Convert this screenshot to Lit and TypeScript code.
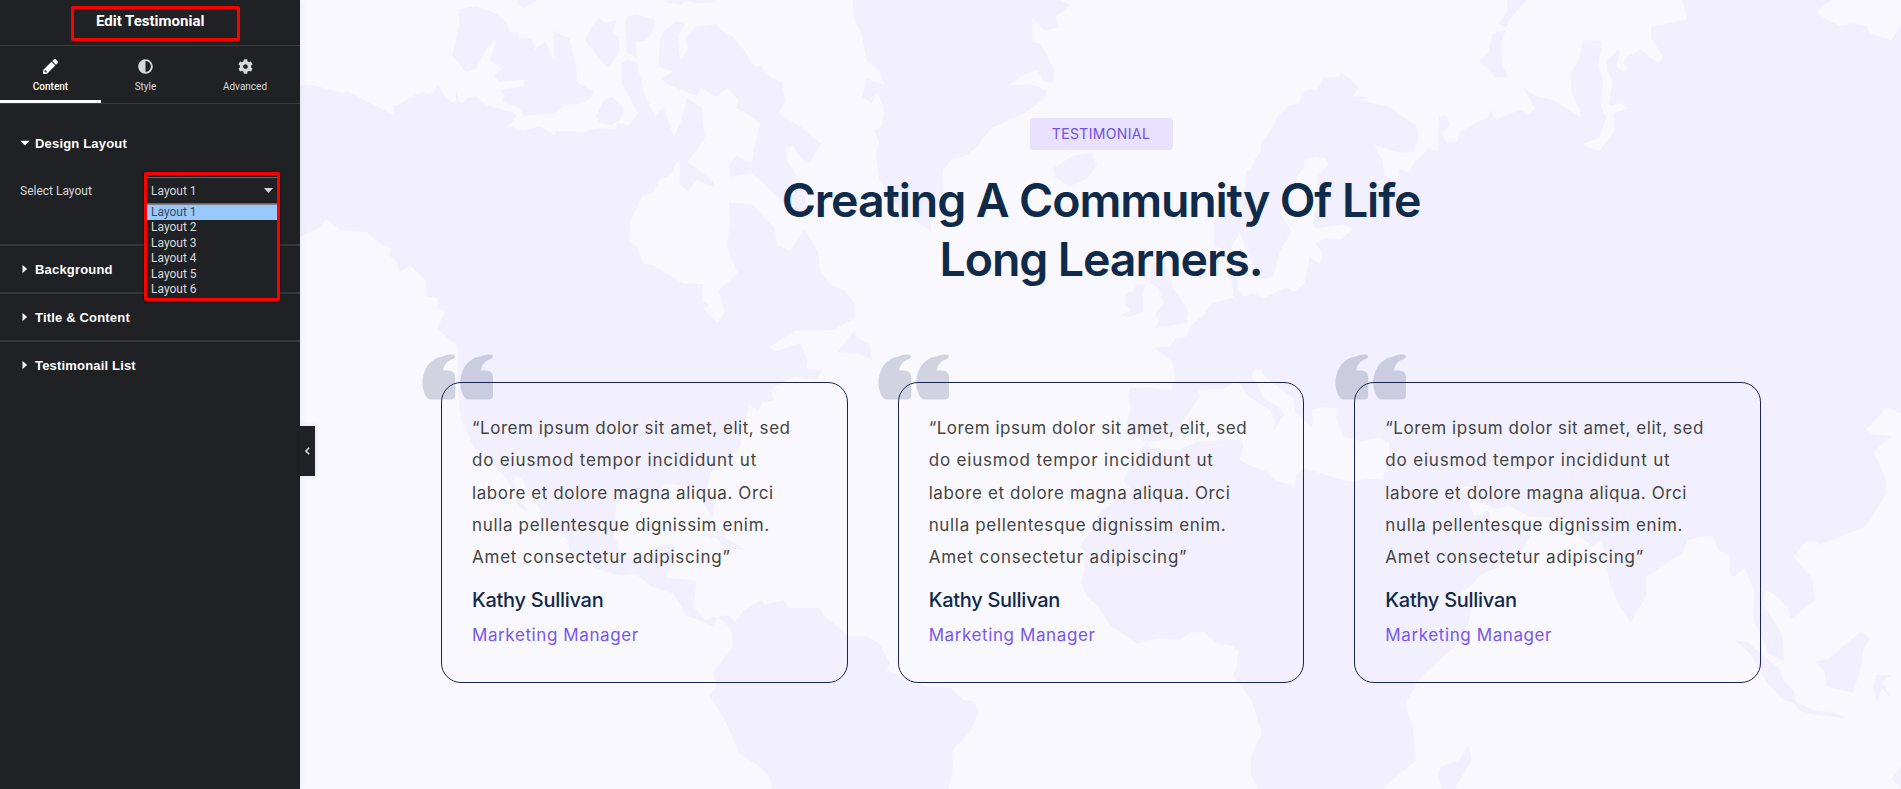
import { LitElement, html, svg, css } from "lit";
import { customElement, property, state } from "lit/decorators.js";
import { classMap } from "lit/directives/class-map.js";
import { styleMap } from "lit/directives/style-map.js";

/* Each map sheet is traced on its own grid and placed by its transform. */
const SHEETS: { transform: string; land: string[]; water: string[] }[] = [
  {
    transform: "translate(290 0) scale(.5102 .33333)",
    land: [
      "M0 256 15 256 40 254 100 277 115 275 205 347 203 315 215 312 245 285 265 276 270 283 283 275 290 252 300 282 318 308 325 302 325 272 334 310 340 308 350 290 365 290 385 315 435 335 445 348 428 377 458 391 490 380 518 404 522 392 575 396 600 385 640 388 640 368 655 372 665 376 680 345 700 300 715 350 732 322 752 410 765 370 778 292 808 325 810 370 815 410 780 485 830 545 830 560 797 540 780 575 763 550 765 500 760 480 745 525 725 540 710 580 690 590 668 660 665 722 680 740 693 792 712 795 770 850 808 853 808 903 822 915 810 925 838 967 852 935 840 872 878 820 855 738 862 680 860 608 905 612 950 685 955 735 980 752 1000 710 1007 685 1035 755 1040 815 1060 855 1085 870 1107 910 1107 955 1065 990 990 992 940 1040 950 1055 1000 1030 1015 1080 1012 1105 1045 1110 1030 1140 990 1130 950 1160 938 1200 330 1200 328 1040 288 985 305 935 288 925 290 895 268 890 265 840 235 795 215 820 210 790 195 765 198 745 180 735 150 697 100 690 70 657 58 682 15 715 0 730Z",
      "M330 28 365 18 400 38 425 65 430 95 445 95 450 115 475 115 480 150 500 125 518 180 516 92 548 115 560 190 565 250 597 275 585 300 560 315 540 313 520 340 460 348 450 325 415 305 420 290 412 270 460 258 458 240 410 245 400 225 415 208 392 180 405 115 385 145 365 205 345 217 318 165 332 75Z",
      "M590 85 605 55 618 68 640 60 632 100 645 110 645 160 623 205 578 122Z",
      "M660 50 680 42 715 60 710 100 695 122 678 122 680 178 660 155 657 80Z",
      "M650 190 662 178 680 190 695 285 715 345 705 360 682 338 650 250Z",
      "M600 350 615 300 632 290 655 325 648 360 630 375 610 372Z",
      "M735 90 755 65 775 68 760 110 765 180 780 150 775 115 795 80 835 72 845 90 870 112 890 150 910 200 922 197 945 235 965 245 970 305 958 340 1005 385 1042 432 1030 455 1020 492 1005 480 985 438 972 445 975 485 1010 570 1010 640 985 640 935 560 905 520 865 530 858 500 875 465 905 490 910 440 922 370 890 335 875 325 878 300 858 263 835 290 805 262 800 290 735 250 730 235 750 215 722 200 725 120Z",
      "M445 10 458 26 485 0 445 0Z",
      "M730 0 738 8 765 14 775 4 800 10 835 5 835 0Z",
      "M1102 0 1107 65 1120 100 1130 180 1155 215 1165 255 1130 235 1122 290 1140 310 1150 275 1165 330 1160 380 1145 390 1155 430 1148 460 1155 540 1200 640 1255 690 1262 640 1280 580 1280 510 1300 475 1320 470 1340 450 1375 385 1440 340 1480 295 1482 270 1450 252 1410 255 1430 230 1465 210 1478 245 1495 248 1498 210 1482 160 1470 130 1455 125 1455 55 1480 92 1508 80 1500 50 1530 15 1510 0Z",
      "M1107 990 1112 1015 1135 1030 1141 1080 1110 1060 1073 1057Z",
    ],
    water: [],
  },
  {
    transform: "translate(1090 0) scale(.51722 .33333)",
    land: [
      "M1145 0 1155 58 1085 80 1085 115 1108 170 1098 190 1065 148 1038 170 1030 190 1042 205 1030 215 1018 200 1025 145 1000 180 1000 210 1010 245 1003 318 1028 310 1040 325 1012 340 1015 390 985 453 953 437 958 428 985 415 998 350 988 320 992 240 983 200 990 122 953 120 943 190 928 215 932 285 948 330 948 352 895 300 860 288 838 260 845 285 860 325 850 342 830 330 785 360 775 330 770 350 715 395 710 425 690 428 680 400 695 375 690 345 675 350 672 455 655 445 625 490 618 518 595 505 600 545 570 530 565 480 550 435 600 458 625 455 636 410 630 375 580 322 525 300 540 290 508 290 520 260 487 218 480 232 452 232 440 268 420 270 408 280 405 310 385 315 360 355 355 380 330 430 330 455 318 480 310 515 302 510 300 570 240 670 240 740 270 750 290 700 310 775 330 840 355 830 365 760 390 695 368 640 385 560 415 500 415 480 435 470 455 475 460 495 440 530 440 600 430 680 440 685 490 672 508 688 485 718 455 715 435 730 450 760 445 795 425 770 415 850 395 875 380 862 335 895 315 878 300 888 285 870 285 830 270 800 278 893 235 910 220 945 195 975 185 1010 165 1015 155 1040 125 1045 160 1085 165 1130 160 1175 75 1172 78 1205 1568 1205 1568 70 1550 122 1508 100 1502 78 1475 70 1450 78 1410 45 1408 30 1435 0Z",
      "M808 0 845 0 810 60 795 130 797 190 808 233 783 232 753 180 770 160 778 100 808 88 788 70 805 40Z",
      "M120 790 145 790 160 860 190 930 187 970 125 985 133 960 125 945 143 905 130 860 115 850Z",
      "M85 853 108 853 103 880 103 935 78 950 60 945 78 930 68 915 68 880 82 875Z",
      "M-71 504.900-33 467.100 1 459 14 495-5 535-39 560-68 531Z",
    ],
    water: [],
  },
  {
    transform: "translate(870 300) scale(.33333)",
    land: [
      "M855 140 905 180 915 230 905 270 825 262 780 265 773 285 782 320 765 400 800 415 830 425 770 520 760 545 780 560 690 640 630 740 650 760 635 850 650 890 680 915 720 975 800 1030 870 1015 930 1020 960 998 1005 995 1035 1030 1080 1035 1105 1050 1100 1100 1088 1125 1145 1200 1175 1300 1142 1370 1142 1420 1165 1467 1538 1467 1565 1440 1565 130Z",
    ],
    water: [
      "M830 427 925 410 940 360 990 290 985 270 1060 268 1090 248 1112 252 1130 285 1200 330 1215 360 1212 392 1232 360 1245 345 1225 320 1180 295 1160 245 1145 235 1148 213 1172 208 1185 232 1270 295 1275 335 1325 383 1335 345 1360 325 1400 325 1395 345 1420 410 1500 430 1550 415 1575 430 1565 480 1540 540 1500 535 1440 545 1300 505 1280 525 1275 555 1240 550 1215 540 1190 515 1150 500 1108 480 1120 440 1115 418 980 425 930 450 840 445Z",
    ],
  },
  {
    transform: "translate(1090 390) scale(.51722 .33333)",
    land: [
      "M570 0 1568 0 1568 70 1540 52 1500 120 1515 133 1550 138 1515 185 1538 265 1540 310 1500 410 1410 465 1405 455 1385 455 1360 500 1395 560 1402 630 1355 688 1348 650 1320 610 1305 600 1300 640 1325 700 1340 740 1342 815 1310 790 1300 740 1282 690 1285 600 1265 535 1245 560 1235 545 1238 500 1215 480 1205 438 1185 440 1155 450 1145 490 1075 560 1075 620 1045 698 1025 650 1005 580 990 450 972 470 940 430 945 400 918 385 850 380 808 345 790 358 750 335 735 290 715 292 730 325 742 375 755 375 770 360 778 400 820 405 850 440 832 490 790 530 755 555 735 590 665 655 740 640 730 710 705 770 640 860 610 940 625 1020 630 1110 565 1197 560 1197Z",
      "M732 1065 738 1110 705 1197 680 1197 672 1150 680 1130 715 1110Z",
      "M1245 748 1270 755 1335 840 1340 870 1360 900 1365 935 1400 960 1440 968 1460 985 1400 975 1370 960 1362 938 1340 930 1310 880 1275 790Z",
      "M1402 815 1430 805 1490 725 1508 745 1495 780 1490 840 1475 910 1425 890 1420 845Z",
      "M1520 855 1552 855 1532 875 1548 920 1530 895 1522 940 1515 890Z",
      "M1568 1130 1550 1165 1568 1197Z",
    ],
    water: ["M430 60 450 50 475 58 480 140 520 155 560 143 578 160 578 205 567 262 545 268 505 270 440 240Z"],
  },
  {
    transform: "translate(290 390) scale(.5102 .33333)",
    land: [
      "M328 0 335 90 360 170 425 265 440 320 450 350 500 400 545 450 548 490 600 535 650 558 675 550 710 590 750 610 768 650 775 675 828 707 840 680 860 675 872 695 890 660 925 630 930 645 965 630 980 655 1040 655 1045 675 1095 737 1130 738 1155 760 1175 820 1170 842 1235 878 1238 888 1295 893 1320 930 1343 935 1350 970 1335 1020 1300 1080 1298 1150 1290 1200 945 1200 940 1160 920 1130 880 1090 855 1000 822 915 838 890 828 850 868 770 865 720 848 690 828 680 815 690 790 650 795 600 797 572 735 562 750 530 752 460 720 470 705 510 670 510 645 480 635 430 640 340 670 310 725 310 735 280 800 295 812 340 828 385 832 340 815 300 825 250 845 220 885 165 880 110 895 85 900 45 918 62 925 40 950 30 938 0Z",
      "M785 437 820 428 850 440 893 480 850 475 840 450 820 438Z",
    ],
    water: ["M437 262 455 265 465 305 510 400 495 400 470 370 445 320Z"],
  },
];

@customElement("world-map")
class WorldMap extends LitElement {
  static styles = css`
    :host { display: block; }
    .map { display: block; width: 100%; height: 100%; }
    .land { fill: #f2f0fe; }
    .water { fill: #f9f8ff; }
  `;
  render() {
    return html`<svg class="map" viewBox="300 0 1601 789" preserveAspectRatio="none" aria-hidden="true">
      ${SHEETS.map(
        (s) => svg`<g transform=${s.transform}>
          ${s.land.map((d) => svg`<path class="land" d=${d}></path>`)}
          ${s.water.map((d) => svg`<path class="water" d=${d}></path>`)}
        </g>`
      )}
    </svg>`;
  }
}

interface Line { text: string; tracking: number; }
const QUOTE: Line[] = [
  { text: "“Lorem ipsum dolor sit amet, elit, sed", tracking: 0.54 },
  { text: "do eiusmod tempor incididunt ut", tracking: 0.82 },
  { text: "labore et dolore magna aliqua. Orci", tracking: 0.6 },
  { text: "nulla pellentesque dignissim enim.", tracking: 0.66 },
  { text: "Amet consectetur adipiscing”", tracking: 0.78 },
];

@customElement("testimonial-card")
class TestimonialCard extends LitElement {
  @property() name = "";
  @property() position = "";
  @property({ attribute: false }) lines: Line[] = [];

  static styles = css`
    :host { display: block; }
    .card {
      position: relative;
      box-sizing: border-box;
      height: 301px;
      border: 1px solid #1a2552;
      border-radius: 20px;
      padding: 29px 30px;
      font-family: Inter, sans-serif;
    }
    .mark {
      position: absolute;
      left: -20.4px;
      top: -29px;
      width: 71px;
      height: 46px;
      fill: #142250;
      opacity: 0.17;
    }
    .line { display: block; height: 32.3px; font-size: 17px; line-height: 32.3px; color: #454540; white-space: nowrap; font-weight: 400; }
    .name { margin-top: 12.2px; font-size: 20px; line-height: 28px; font-weight: 550; letter-spacing: -0.28px; color: #10294a; }
    .role { margin-top: 5.5px; font-size: 17px; line-height: 32px; font-weight: 400; letter-spacing: 0.6px; color: #7857ec; }
  `;
  render() {
    const mark = "M97 48C52 54 36 96 36 128C36 150 45 167 52 174Q55 177 60 177H122Q134 177 134 165V110Q134 90 112 90H97Q101 64 129 55Q134 52 134 48Q133 42 126 42C114 42 105 44 97 48Z";
    return html`<article class="card">
      <svg class="mark" viewBox="34.500 40.500 213 138" aria-hidden="true">
        <path d=${mark}></path>
        <path d=${mark} transform="translate(113.500 0)"></path>
      </svg>
      ${this.lines.map((l) => html`<span class="line" style=${styleMap({ letterSpacing: `${l.tracking}px` })}>${l.text}</span>`)}
      <div class="name">${this.name}</div>
      <div class="role">${this.position}</div>
    </article>`;
  }
}

@customElement("editor-panel")
class EditorPanel extends LitElement {
  @state() private selected = 1;
  @state() private tab = "Content";

  static styles = css`
    :host { display: block; }
    .panel {
      position: relative;
      box-sizing: border-box;
      width: 300px;
      height: 789px;
      background: #1f2124;
      color: #d5d8dc;
      font-family: Roboto, sans-serif;
      box-shadow: 0 0 8px rgba(30, 20, 60, 0.06);
    }
    .header { display: flex; height: 45px; padding-left: 71px; border-bottom: 1px solid #3a3b3f; }
    .title {
      box-sizing: border-box;
      width: 169px;
      height: 35px;
      margin-top: 6px;
      padding-left: 22px;
      border: 3px solid #fe0000;
      border-radius: 2px;
      font-size: 15px;
      line-height: 24px;
      font-weight: 700;
      color: #fff;
    }
    .tabs { display: grid; grid-template-columns: 101px 89px 110px; height: 57px; border-bottom: 1px solid #3a3b3f; }
    .tab {
      box-sizing: border-box;
      display: flex;
      flex-direction: column;
      align-items: center;
      padding-top: 13px;
      border-bottom: 3px solid transparent;
      font-size: 10px;
      line-height: 12px;
      font-weight: 400;
      cursor: pointer;
    }
    .tab.on { border-bottom-color: #fff; color: #fff; font-weight: 500; }
    .tab svg { width: 15px; height: 15px; fill: currentColor; margin-bottom: 7px; }
    .section-title {
      display: flex;
      align-items: center;
      height: 46px;
      padding-left: 20px;
      border-bottom: 2px solid #36373b;
      font: 700 13px "Liberation Sans", sans-serif;
      letter-spacing: 0.18px;
      color: #fff;
    }
    .section-title.last { border-bottom: 0; }
    .section-title svg { width: 10px; height: 10px; margin-right: 5px; margin-top: -1px; fill: #fff; }
    .design { box-sizing: border-box; height: 142px; border-bottom: 2px solid #36373b; padding-top: 16px; }
    .design .section-title { border: 0; }
    .field { display: flex; padding-left: 20px; margin-top: 6px; font-size: 12px; }
    .label { width: 124px; line-height: 38px; }
    .picker {
      position: relative;
      box-sizing: border-box;
      width: 136px;
      height: 129px;
      border: 3px solid #fe0000;
      border-radius: 2px;
      background: #1f2124;
      box-shadow: 0 1px 3px rgba(0, 0, 0, 0.5);
      padding-top: 2px;
      z-index: 1;
    }
    .select {
      box-sizing: border-box;
      display: flex;
      align-items: center;
      justify-content: space-between;
      height: 27px;
      padding: 0 4px;
      border-top: 1px solid #64676c;
      border-bottom: 1px solid #64676c;
    }
    .select svg { width: 9px; height: 5px; fill: #d5d8dc; }
    .menu { border-top: 1px solid #7d7f84; margin-top: -0.5px; }
    .option { height: 15.500px; line-height: 15px; padding-left: 4px; color: #d9dbde; cursor: pointer; }
    .option.on { background: #99c8ff; color: #40495a; }
    .toggle {
      position: absolute;
      left: 300px;
      top: 426px;
      width: 15px;
      height: 50px;
      display: flex;
      align-items: center;
      justify-content: center;
      background: #1f2124;
      box-shadow: 1px 0 5px rgba(30, 20, 60, 0.1);
    }
    .toggle svg { width: 5px; height: 8px; fill: none; stroke: #d5d8dc; stroke-width: 1.6; }
  `;

  private icon(name: string) {
    if (name === "Content")
      return svg`<svg viewBox="0 0 512 512"><path d="M290.700 93.200l128 128-278 278-114.100 12.600C11.300 513.500-1.600 500.600.1 485.300l12.700-114.200 277.900-277.900zm207.200-19.100l-60.100-60.100c-18.800-18.800-49.200-18.800-67.900 0l-56.600 56.600 128 128 56.600-56.600c18.800-18.700 18.800-49.200 0-67.900zM52 400v34h34v30h30l24-24-64-64z" fill-rule="evenodd"></path></svg>`;
    if (name === "Style")
      return svg`<svg viewBox="0 0 512 512"><path d="M8 256c0 137 111 248 248 248s248-111 248-248S393 8 256 8 8 119 8 256zm248 184V72c101.700 0 184 82.300 184 184 0 101.700-82.300 184-184 184z"></path></svg>`;
    return svg`<svg viewBox="0 0 512 512"><path d="M487.400 315.700l-42.600-24.600c4.300-23.200 4.300-47 0-70.200l42.600-24.600c4.900-2.800 7.100-8.600 5.500-14-11.100-35.600-30-67.800-54.700-94.600-3.800-4.100-10-5.100-14.800-2.300L380.800 110c-17.900-15.400-38.500-27.300-60.800-35.100V25.800c0-5.600-3.900-10.500-9.400-11.700-36.700-8.200-74.300-7.800-109.200 0-5.500 1.200-9.400 6.100-9.400 11.700V75c-22.200 7.900-42.800 19.800-60.800 35.100L88.700 85.500c-4.900-2.800-11-1.900-14.800 2.300-24.700 26.700-43.600 58.900-54.700 94.600-1.700 5.400.6 11.200 5.500 14L67.300 221c-4.300 23.200-4.300 47 0 70.200l-42.600 24.600c-4.900 2.800-7.100 8.600-5.500 14 11.100 35.600 30 67.800 54.700 94.600 3.800 4.100 10 5.100 14.800 2.300l42.600-24.600c17.900 15.400 38.500 27.300 60.800 35.100v49.200c0 5.600 3.900 10.500 9.400 11.700 36.700 8.200 74.300 7.800 109.200 0 5.500-1.200 9.400-6.100 9.400-11.700v-49.200c22.200-7.900 42.800-19.800 60.800-35.100l42.600 24.600c4.900 2.800 11 1.900 14.800-2.300 24.700-26.700 43.600-58.900 54.700-94.600 1.500-5.500-.7-11.300-5.600-14.100zM256 336c-44.100 0-80-35.900-80-80s35.900-80 80-80 80 35.900 80 80-35.900 80-80 80z"></path></svg>`;
  }

  render() {
    const down = svg`<svg viewBox="0 0 10 10"><path d="M0.500 2.800H9.500L5 7.500Z"></path></svg>`;
    const right = svg`<svg viewBox="0 0 10 10"><path d="M2.500 1 7.200 5 2.500 9Z"></path></svg>`;
    const rest = ["Background", "Title & Content", "Testimonail List"];
    return html`<aside class="panel">
      <div class="header"><div class="title">Edit Testimonial</div></div>
      <nav class="tabs">
        ${["Content", "Style", "Advanced"].map(
          (t) => html`<div class=${classMap({ tab: true, on: t === this.tab })} @click=${() => (this.tab = t)}>${this.icon(t)}${t}</div>`
        )}
      </nav>
      <section class="design">
        <div class="section-title">${down}Design Layout</div>
        <div class="field">
          <div class="label">Select Layout</div>
          <div class="picker">
            <div class="select">Layout ${this.selected}<svg viewBox="0 0 9 5"><path d="M0 0H9L4.500 5Z"></path></svg></div>
            <div class="menu">
              ${[1, 2, 3, 4, 5, 6].map(
                (n) => html`<div class=${classMap({ option: true, on: n === this.selected })} @click=${() => (this.selected = n)}>Layout ${n}</div>`
              )}
            </div>
          </div>
        </div>
      </section>
      ${rest.map((r, i) => html`<div class=${classMap({ "section-title": true, last: i === rest.length - 1 })}>${right}${r}</div>`)}
      <div class="toggle"><svg viewBox="0 0 5 8"><path d="M4.200 0.800 1 4 4.200 7.200"></path></svg></div>
    </aside>`;
  }
}

@customElement("app-root")
class AppRoot extends LitElement {
  static styles = css`
    :host { display: block; }
    .page { display: grid; grid-template-columns: 300px 1fr; height: 789px; overflow: hidden; background: #f9f8ff; }
    .panel { position: relative; z-index: 2; }
    .stage { position: relative; font-family: Inter, sans-serif; }
    .backdrop { position: absolute; inset: 0; }
    .content { position: relative; display: flex; flex-direction: column; align-items: center; padding: 118px 0 0 1px; }
    .badge {
      box-sizing: border-box;
      width: 143px;
      height: 32px;
      border-radius: 4px;
      background: #e8e1ff;
      color: #7150e4;
      font-size: 14px;
      line-height: 32px;
      font-weight: 400;
      letter-spacing: 0.35px;
      text-align: center;
    }
    .heading { margin: 21.4px 0 0; width: 700px; font-size: 46.500px; line-height: 58.700px; font-weight: 600; letter-spacing: -1.12px; text-align: center; color: #0f2b49; }
    .cards { display: grid; grid-template-columns: repeat(3, 1fr); gap: 50px; width: 1320px; margin-top: 93.200px; }
  `;
  render() {
    return html`<main class="page">
      <editor-panel class="panel"></editor-panel>
      <section class="stage">
        <world-map class="backdrop"></world-map>
        <div class="content">
          <div class="badge">TESTIMONIAL</div>
          <h2 class="heading">Creating A Community Of Life<br />Long Learners.</h2>
          <div class="cards">
            ${[0, 1, 2].map(() => html`<testimonial-card name="Kathy Sullivan" position="Marketing Manager" .lines=${QUOTE}></testimonial-card>`)}
          </div>
        </div>
      </section>
    </main>`;
  }
}
